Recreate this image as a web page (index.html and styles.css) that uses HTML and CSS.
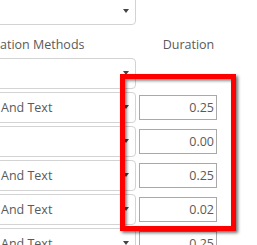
FILE: index.html
```html
<!DOCTYPE html>
<html lang="en">
<head>
    <meta charset="UTF-8">
    <title>Duration</title>
    <link rel="stylesheet" href="styles.css">
</head>
<body>
    <div class="sheet">
        <div class="row top-row">
            <div class="select"></div>
        </div>
        <div class="row head-row">
            <div class="head head-left">ation Methods</div>
            <div class="head head-right">Duration</div>
        </div>
        <div class="row">
            <div class="select"></div>
        </div>
        <div class="row">
            <div class="select">And Text</div>
            <div class="cell"><input class="num" type="text" value="0.25"></div>
        </div>
        <div class="row">
            <div class="select"></div>
            <div class="cell"><input class="num" type="text" value="0.00"></div>
        </div>
        <div class="row">
            <div class="select">And Text</div>
            <div class="cell"><input class="num" type="text" value="0.25"></div>
        </div>
        <div class="row">
            <div class="select">And Text</div>
            <div class="cell"><input class="num" type="text" value="0.02"></div>
        </div>
        <div class="row">
            <div class="select">And Text</div>
            <div class="cell"><input class="num" type="text" value="0.25"></div>
        </div>
    </div>

    <!-- annotation frame drawn over the duration column -->
    <div class="mark"></div>
</body>
</html>
```

FILE: styles.css
```css
html, body {
    margin: 0;
    padding: 0;
    background-color: #fff;
    overflow: hidden;
}
body {
    font-family: "Open Sans", Arial, sans-serif;
    font-size: 12.5px;
    color: #5a5a5a;
    width: 257px;
    height: 245px;
    position: relative;
}
.sheet {
    margin-left: -10px;
    margin-top: -6px;
}
.row {
    display: flex;
    align-items: center;
    gap: 3px;
    margin-bottom: 3px;
}
.select {
    box-sizing: border-box;
    width: 146px;
    height: 31px;
    border: 1px solid #d3d3d3;
    border-radius: 4px;
    padding-left: 10px;
    line-height: 29px;
    position: relative;
    flex-shrink: 0;
}
.select::after {
    content: "";
    position: absolute;
    right: 6px;
    top: 12px;
    border-left: 3px solid transparent;
    border-right: 3px solid transparent;
    border-top: 4px solid #444;
}
.top-row .select::after {
    top: 14px;
}
.head-row {
    margin: 0;
    height: 30px;
    align-items: flex-end;
    padding-bottom: 5px;
    box-sizing: border-box;
}
.head {
    line-height: 16px;
}
.head-left {
    width: 146px;
    padding-left: 10px;
    box-sizing: border-box;
}
.head-right {
    width: 99px;
    text-align: center;
}
.cell {
    width: 99px;
}
.num {
    box-sizing: border-box;
    width: 78px;
    height: 25px;
    border: 1px solid #a9a9a9;
    margin: 0;
    padding: 0 2px;
    font-family: "Open Sans", Arial, sans-serif;
    font-size: 12.5px;
    color: #5a5a5a;
    text-align: right;
    display: block;
}
.mark {
    position: absolute;
    left: 120px;
    top: 74px;
    width: 116px;
    height: 157px;
    box-sizing: border-box;
    border: 5px solid #ff0000;
    box-shadow: 2px 2px 3px rgba(0, 0, 0, 0.55), inset 2px 2px 3px rgba(0, 0, 0, 0.45);
}
```
